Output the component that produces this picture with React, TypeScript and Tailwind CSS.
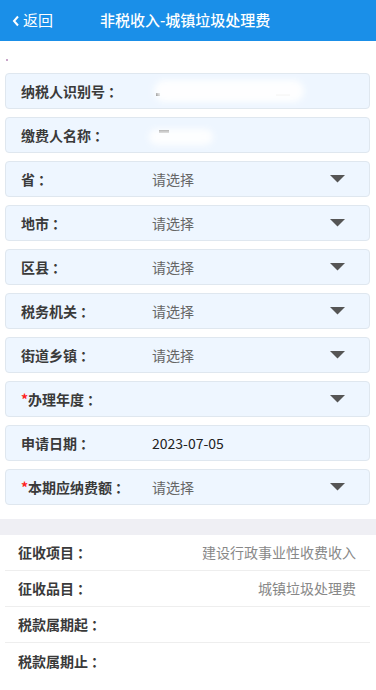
import React from 'react';

const cjk = { fontFamily: '"Microsoft YaHei", "Noto Sans CJK SC", "Noto Sans", sans-serif' };

type Field = {
  label: string;
  value?: string;
  required?: boolean;
  select?: boolean;
  dark?: boolean;
  blur?: 'id' | 'name';
};

const FIELDS: Field[] = [
  { label: '纳税人识别号', blur: 'id' },
  { label: '缴费人名称', blur: 'name' },
  { label: '省', value: '请选择', select: true },
  { label: '地市', value: '请选择', select: true },
  { label: '区县', value: '请选择', select: true },
  { label: '税务机关', value: '请选择', select: true },
  { label: '街道乡镇', value: '请选择', select: true },
  { label: '办理年度', required: true, select: true },
  { label: '申请日期', value: '2023-07-05', dark: true },
  { label: '本期应纳费额', value: '请选择', required: true, select: true },
];

const INFO = [
  { label: '征收项目', value: '建设行政事业性收费收入' },
  { label: '征收品目', value: '城镇垃圾处理费' },
  { label: '税款属期起', value: '' },
  { label: '税款属期止', value: '' },
];

const Caret = () => (
  <svg width="15" height="8" viewBox="0 0 15 8" className="shrink-0">
    <path d="M0 0 L15 0 L7.5 7.5 Z" fill="#555" />
  </svg>
);

const Colon = () => <span className="ml-[3px]">：</span>;

const FieldRow: React.FC<{ f: Field }> = ({ f }) => (
  <div className="h-[36px] mx-[5px] mr-[6px] rounded-[4px] border border-[#dfe7ef] bg-[#eef6ff] flex items-center pl-[15px] pr-[24px] relative">
    <div className="w-[131px] shrink-0 text-[14px] font-semibold text-[#3a3a3a] whitespace-nowrap">
      {f.required && <span className="text-[#ff2020]">*</span>}
      {f.label}
      <Colon />
    </div>
    <div className={`flex-1 text-[14px] ${f.dark ? 'text-[#222]' : 'text-[#666]'}`}>{f.value}</div>
    {f.select && <Caret />}
    {f.blur === 'id' && (
      <div className="absolute left-[148px] top-[6px] w-[150px] h-[22px]">
        <div className="absolute left-[2px] top-[13px] w-[4px] h-[3px] bg-[#333]" />
        <div className="absolute left-[122px] top-[14px] w-[14px] h-[2px] bg-[#999]" />
        <div className="absolute inset-0 bg-white rounded-full blur-[3px] opacity-95" />
      </div>
    )}
    {f.blur === 'name' && (
      <div className="absolute left-[143px] top-[7px] w-[66px] h-[22px]">
        <div className="absolute left-[10px] top-[5px] w-[10px] h-[3px] bg-[#555]" />
        <div className="absolute left-[0px] top-[4px] w-[64px] h-[16px] bg-white rounded-full blur-[3px] opacity-90" />
      </div>
    )}
  </div>
);

const App: React.FC = () => {
  return (
    <div className="w-[376px] min-h-[690px] bg-white" style={cjk}>
      {/* header */}
      <div className="h-[41px] bg-[#1a8fe8] flex items-center text-white relative">
        <div className="flex items-center pl-[12px]">
          <svg width="8" height="12" viewBox="0 0 8 12">
            <path d="M6 1.5 L2 6 L6 10.5" stroke="white" strokeWidth="2" fill="none" />
          </svg>
          <span className="ml-[3px] text-[15px]">返回</span>
        </div>
        <div className="ml-[47px] text-[15px] font-medium">非税收入-城镇垃圾处理费</div>
      </div>

      <div className="h-[32px] relative">
        <div className="absolute left-[6px] top-[18px] w-[2px] h-[2px] bg-[#c9a6c9]" />
      </div>

      <div className="flex flex-col gap-[8px]">
        {FIELDS.map((f) => (
          <FieldRow key={f.label} f={f} />
        ))}
      </div>

      <div className="h-[14px]" />
      <div className="h-[16px] bg-[#efeff4]" />

      <div className="mx-[5px] mr-[6px]">
        {INFO.map((r, i) => (
          <div
            key={r.label}
            className={`h-[36px] flex items-center justify-between pl-[13px] pr-[14px] ${i < INFO.length - 1 ? 'border-b border-[#eeeeee]' : ''}`}
          >
            <span className="text-[14px] font-semibold text-[#3a3a3a]">
              {r.label}
              <Colon />
            </span>
            <span className="text-[14px] text-[#888]">{r.value}</span>
          </div>
        ))}
      </div>
    </div>
  );
};

export default App;
